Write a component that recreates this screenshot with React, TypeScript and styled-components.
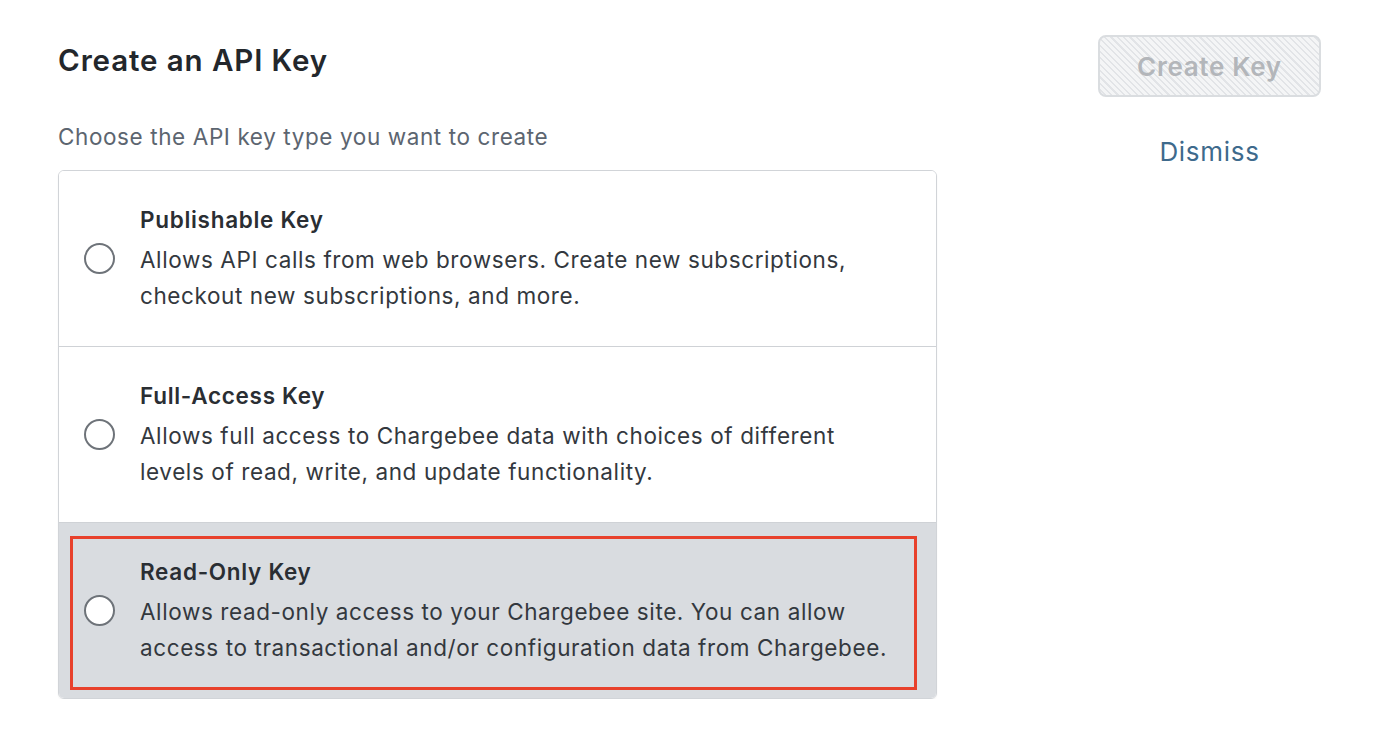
import React, { useState } from "react";
import styled, { createGlobalStyle } from "styled-components";

const GlobalStyle = createGlobalStyle`
  html, body {
    margin: 0;
    padding: 0;
    background: #fff;
    font-family: Inter, "Noto Sans", "Liberation Sans", sans-serif;
    -webkit-font-smoothing: antialiased;
  }
`;

const Page = styled.div`
  display: flex;
  align-items: flex-start;
  padding: 40px 58px 0 58px;
`;

const Main = styled.div`
  width: 879px;
  display: flex;
  flex-direction: column;
`;

const Title = styled.h1`
  margin: 0;
  font-size: 29.5px;
  line-height: 40px;
  font-weight: 600;
  color: #23272c;
  letter-spacing: 0.9px;
`;

const Subtitle = styled.p`
  margin: 0;
  margin-top: 42px;
  font-size: 22.5px;
  line-height: 30px;
  color: #5c6570;
  letter-spacing: 0.6px;
`;

const Card = styled.div`
  margin-top: 18px;
  border: 1px solid #d1d4d8;
  border-radius: 6px;
  overflow: hidden;
  box-shadow: 0 1px 2px rgba(0, 0, 0, 0.06);
`;

const Option = styled.label<{ $active?: boolean }>`
  position: relative;
  display: flex;
  align-items: center;
  gap: 25px;
  padding: 31px 20px 32px 25px;
  background: ${(p) => (p.$active ? "#d9dce0" : "#fff")};
  cursor: pointer;

  & + & {
    border-top: 1px solid #cfd2d6;
  }
`;

const Radio = styled.span`
  flex: none;
  width: 27px;
  height: 27px;
  border-radius: 50%;
  border: 2px solid #6e7379;
  background: #fff;
`;

const Body = styled.div`
  display: flex;
  flex-direction: column;
`;

const OptionTitle = styled.div`
  font-size: 22.5px;
  line-height: 36px;
  font-weight: 600;
  color: #2a2e33;
  letter-spacing: 0.7px;
`;

const OptionDesc = styled.div`
  margin-top: 4px;
  font-size: 22.5px;
  line-height: 36px;
  color: #33383e;
  letter-spacing: 0.6px;
`;

const Highlight = styled.span`
  position: absolute;
  left: 11px;
  right: 19px;
  top: 13px;
  bottom: 8px;
  border: 3px solid #e8412c;
  pointer-events: none;
`;

const Aside = styled.div`
  margin-left: 161px;
  margin-top: -5px;
  width: 223px;
  display: flex;
  flex-direction: column;
  align-items: center;
`;

const CreateButton = styled.button`
  width: 223px;
  height: 62px;
  border: 2px solid #dadde0;
  border-radius: 8px;
  background: repeating-linear-gradient(
    45deg,
    #f4f5f6 0px,
    #f4f5f6 3px,
    #e2e4e7 3px,
    #e2e4e7 4.5px
  );
  font-family: inherit;
  font-size: 26px;
  font-weight: 600;
  letter-spacing: 0.7px;
  color: #b3b6ba;
  cursor: not-allowed;
`;

const Dismiss = styled.a`
  margin-top: 38px;
  font-size: 26px;
  line-height: 34px;
  letter-spacing: 0.7px;
  color: #3e6a8c;
  cursor: pointer;
`;

const options = [
  {
    title: "Publishable Key",
    desc: (
      <>
        Allows API calls from web browsers. Create new subscriptions,
        <br />
        checkout new subscriptions, and more.
      </>
    ),
  },
  {
    title: "Full-Access Key",
    desc: (
      <>
        Allows full access to Chargebee data with choices of different
        <br />
        levels of read, write, and update functionality.
      </>
    ),
  },
  {
    title: "Read-Only Key",
    desc: (
      <>
        Allows read-only access to your Chargebee site. You can allow
        <br />
        access to transactional and/or configuration data from Chargebee.
      </>
    ),
  },
];

export default function App() {
  const [hovered] = useState<number>(2);
  return (
    <>
      <GlobalStyle />
      <Page>
        <Main>
          <Title>Create an API Key</Title>
          <Subtitle>Choose the API key type you want to create</Subtitle>
          <Card>
            {options.map((option, i) => (
              <Option key={option.title} $active={i === hovered}>
                <Radio />
                <Body>
                  <OptionTitle>{option.title}</OptionTitle>
                  <OptionDesc>{option.desc}</OptionDesc>
                </Body>
                {i === hovered && <Highlight />}
              </Option>
            ))}
          </Card>
        </Main>
        <Aside>
          <CreateButton disabled>Create Key</CreateButton>
          <Dismiss>Dismiss</Dismiss>
        </Aside>
      </Page>
    </>
  );
}
